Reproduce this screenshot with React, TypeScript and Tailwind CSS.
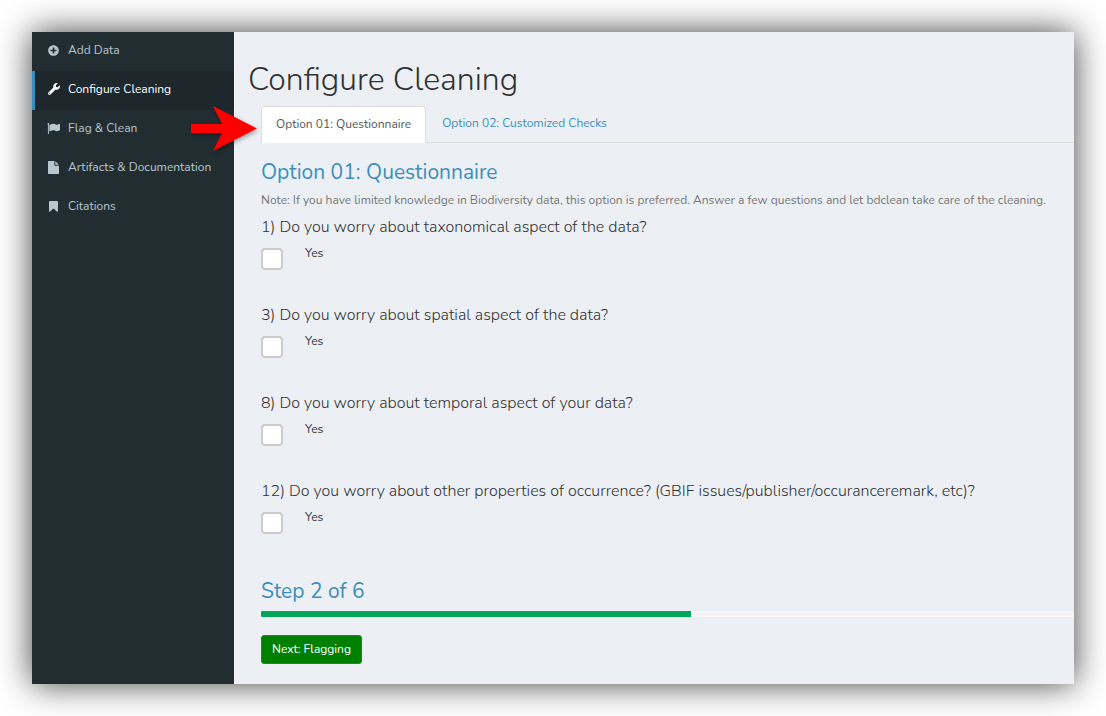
import { useState } from "react";
import { FaPlusCircle, FaWrench } from "react-icons/fa";

function FlagIcon() {
  return (
    <svg viewBox="0 0 1792 1792" className="h-[13px] w-[13px]" fill="currentColor" aria-hidden="true">
      <path d="M320 256q0 72-64 110v1266q0 13-9.500 22.500t-22.500 9.500h-64q-13 0-22.500-9.500t-9.500-22.500v-1266q-64-38-64-110 0-53 37.500-90.500t90.500-37.500 90.500 37.500 37.500 90.500zM1792 320v763q0 25-12.500 38.500t-39.500 27.500q-215 116-369 116-61 0-123.500-22t-108.500-48-115.500-48-142.500-22q-192 0-464 146-17 9-33 9-26 0-45-19t-19-45v-742q0-32 31-55 21-14 79-43 236-120 421-120 107 0 200 29t219 88q38 19 88 19 54 0 117.500-21t110-47 88-47 54.500-21q26 0 45 19t19 45z" />
    </svg>
  );
}

function FileIcon() {
  return (
    <svg viewBox="0 0 1536 1792" className="h-[13px] w-[11px]" fill="currentColor" aria-hidden="true">
      <path d="M1024 512v-472q22 14 36 28l408 408q14 14 28 36h-472zM896 544q0 40 28 68t68 28h544v1056q0 40-28 68t-68 28h-1344q-40 0-68-28t-28-68v-1600q0-40 28-68t68-28h800v544z" />
    </svg>
  );
}

function BookmarkIcon() {
  return (
    <svg viewBox="0 0 9 11" className="h-[11px] w-[9px]" fill="currentColor" aria-hidden="true">
      <path d="M1 0H8Q9 0 9 1V10.200Q9 11 8.200 10.800L4.500 7.400L0.800 10.800Q0 11 0 10.200V1Q0 0 1 0Z" />
    </svg>
  );
}

const navItems = [
  { label: "Add Data", icon: <FaPlusCircle size={11} /> },
  { label: "Configure Cleaning", icon: <FaWrench size={12} /> },
  { label: "Flag & Clean", icon: <FlagIcon /> },
  { label: "Artifacts & Documentation", icon: <FileIcon /> },
  { label: "Citations", icon: <BookmarkIcon /> },
];

const questions = [
  { id: "q1", text: "1) Do you worry about taxonomical aspect of the data?" },
  { id: "q3", text: "3) Do you worry about spatial aspect of the data?" },
  { id: "q8", text: "8) Do you worry about temporal aspect of your data?" },
  {
    id: "q12",
    text: "12) Do you worry about other properties of occurrence? (GBIF issues/publisher/occuranceremark, etc)?",
  },
];

function Sidebar() {
  return (
    <nav className="w-[202px] shrink-0 bg-[#222d32] text-[12px]">
      <ul>
        {navItems.map(({ label, icon }) => {
          const active = label === "Configure Cleaning";
          return (
            <li key={label}>
              <a
                href="#"
                aria-current={active ? "page" : undefined}
                className={
                  active
                    ? "flex h-[39px] items-center gap-2 border-l-3 border-[#3c8dbc] bg-[#1e282c] pb-[3px] pl-3 whitespace-nowrap text-white"
                    : "flex h-[39px] items-center gap-2 border-l-3 border-transparent pb-[3px] pl-3 whitespace-nowrap text-[#b8c7ce]"
                }
              >
                <span className="flex w-[13px] justify-center">{icon}</span>
                {label}
              </a>
            </li>
          );
        })}
      </ul>
    </nav>
  );
}

function Question({ id, text }: { id: string; text: string }) {
  const [checked, setChecked] = useState(false);
  return (
    <fieldset className="h-[88px]">
      <legend className="text-[16px] leading-5 font-[350] whitespace-nowrap text-[#333]">{text}</legend>
      <div className="flex items-start pt-[11px]">
        <input
          id={id}
          type="checkbox"
          checked={checked}
          onChange={(e) => setChecked(e.target.checked)}
          className="h-[22px] w-[22px] appearance-none rounded-[4px] border-2 border-[#ccc] bg-white checked:bg-[#3c8dbc]"
        />
        <label htmlFor={id} className="pl-[22px] text-[12px] leading-[10px] text-[#333]">
          Yes
        </label>
      </div>
    </fieldset>
  );
}

export default function App() {
  return (
    <div className="flex min-h-screen bg-white p-8 font-['Nunito','Lato',sans-serif] text-[#333]">
      <div className="relative flex min-w-0 flex-1 shadow-[0_0_32px_rgba(0,0,0,0.75)]">
        <Sidebar />
        <main className="min-w-0 flex-1 overflow-hidden border-l border-[#f4f6f9] bg-[#ecf0f5]">
          <h1 className="pt-7 pl-[13px] text-[32px] leading-10 font-[350]">Configure Cleaning</h1>
          <div className="pl-[26px]">
            <div role="tablist" className="mt-[6px] flex h-[37px] border-b border-[#ddd] text-[12px]">
              <button
                role="tab"
                aria-selected="true"
                className="-mb-px rounded-t-[4px] border border-b-0 border-[#ddd] bg-white px-[14px] pb-[3px] whitespace-nowrap text-[#555]"
              >
                Option 01: Questionnaire
              </button>
              <button role="tab" aria-selected="false" className="px-4 pb-[2px] whitespace-nowrap text-[#3c8dbc]">
                Option 02: Customized Checks
              </button>
            </div>
            <h2 className="pt-[15px] text-[21px] leading-7 text-[#3c8dbc]">Option 01: Questionnaire</h2>
            <p className="pt-1 text-[12px] leading-5 whitespace-nowrap text-[#777]">
              Note: If you have limited knowledge in Biodiversity data, this option is preferred. Answer a few questions
              and let bdclean take care of the cleaning.
            </p>
            <form className="pt-[7px]">
              {questions.map((q) => (
                <Question key={q.id} id={q.id} text={q.text} />
              ))}
            </form>
            <h2 className="pt-2 text-[21px] leading-7 text-[#3c8dbc]">Step 2 of 6</h2>
            <div
              role="progressbar"
              aria-label="Step 2 of 6"
              aria-valuenow={2}
              aria-valuemax={6}
              className="mt-[6px] h-[6px] bg-[#f5f5f5]"
            >
              <div className="h-full w-[430px] rounded-l-[1px] bg-[#00a65a]" />
            </div>
            <button className="mt-[18px] h-[29px] rounded-[3px] border border-[#1d8a1d] bg-[#008000] px-[10px] pb-[2px] text-[12px] whitespace-nowrap text-white">
              Next: Flagging
            </button>
          </div>
        </main>
        <svg
          aria-hidden="true"
          viewBox="0 0 76 56"
          className="absolute top-[70px] left-[155px] h-[56px] w-[76px] drop-shadow-[1px_2px_2px_rgba(0,0,0,0.35)]"
        >
          <path d="M4 22H35L26 4L70 26.500L26 49L35 31H4Z" fill="#ff0000" />
        </svg>
      </div>
    </div>
  );
}
